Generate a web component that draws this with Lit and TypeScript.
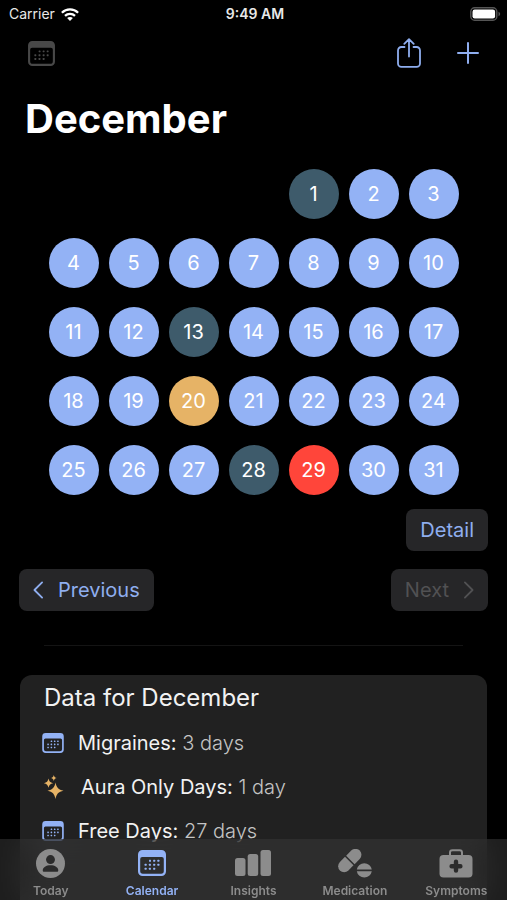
import { LitElement, html, css, svg } from "lit";
import { customElement, property, state } from "lit/decorators.js";
import { classMap } from "lit/directives/class-map.js";

const calendarIcon = html`<svg viewBox="0 0 28 26" fill="currentColor" aria-hidden="true">
  <path fill-rule="evenodd" d="M4.5 0h19A4.5 4.5 0 0 1 28 4.500v17a4.500 4.500 0 0 1-4.500 4.500h-19A4.500 4.500 0 0 1 0 21.500v-17A4.500 4.500 0 0 1 4.500 0zM2.200 9v12a2.700 2.700 0 0 0 2.700 2.700h18.200a2.700 2.700 0 0 0 2.700-2.700V9a2 2 0 0 0-2-2H4.200a2 2 0 0 0-2 2z"/>
  ${[
    [11, 10.5], [15.2, 10.5], [19.4, 10.5],
    [6.6, 14.5], [10.9, 14.5], [15.2, 14.5], [19.4, 14.5],
    [6.6, 18.5], [10.9, 18.5], [15.2, 18.5],
  ].map(([x, y]) => svg`<rect x=${x} y=${y - 0.7} width="2" height="2" rx="0.5"/>`)}
</svg>`;

const sparklesIcon = html`<svg viewBox="0 0 20 24" fill="currentColor" aria-hidden="true">
  <path d="M12 7.500c1 5 2.900 7.200 8 8.200-5.100 1-7 3.200-8 8.200-1-5-2.900-7.200-8-8.200 5.100-1 7-3.200 8-8.200z"/>
  <path d="M5 3.600c.6 2.900 1.700 4 4.600 4.600C6.700 8.800 5.600 9.900 5 12.800 4.400 9.900 3.300 8.800.400 8.200 3.300 7.600 4.400 6.500 5 3.600z"/>
  <path d="M10.300 0c.4 1.900 1.200 2.600 3 3-1.800.4-2.600 1.100-3 3-.4-1.900-1.200-2.600-3-3 1.800-.4 2.600-1.100 3-3z"/>
</svg>`;

const shareIcon = html`<svg viewBox="0 0 24 30" fill="none" stroke="currentColor" stroke-width="1.800" stroke-linecap="round" stroke-linejoin="round" aria-hidden="true">
  <path d="M7.500 9H4.400A3.400 3.400 0 0 0 1 12.400v13A3.400 3.400 0 0 0 4.400 28.800h15.200a3.400 3.400 0 0 0 3.400-3.400v-13A3.400 3.400 0 0 0 19.600 9h-3.100M12 18.500V1.200M7.300 5.800L12 1.100l4.700 4.700"/>
</svg>`;

const plusIcon = html`<svg viewBox="0 0 22 22" fill="none" stroke="currentColor" stroke-width="2" stroke-linecap="round" aria-hidden="true">
  <path d="M11 1v20M1 11h20"/>
</svg>`;

const chevron = (d: string) => html`<svg viewBox="0 0 12 20" fill="none" stroke="currentColor" stroke-width="2" stroke-linecap="round" stroke-linejoin="round" aria-hidden="true">
  <path d=${d}/>
</svg>`;

const wifiIcon = html`<svg viewBox="0 0 18 13" fill="none" stroke="currentColor" stroke-width="2.300" aria-hidden="true">
  <path d="M.9 4.700C5.400.3 12.600.3 17.100 4.700M4 7.800c2.800-2.700 7.200-2.700 10 0"/>
  <path d="M9 13l-2.900-2.900c1.600-1.500 4.200-1.500 5.800 0z" fill="currentColor" stroke="none"/>
</svg>`;

const batteryIcon = html`<svg viewBox="0 0 31 14" aria-hidden="true">
  <rect x=".8" y=".8" width="26" height="12.400" rx="3.800" fill="none" stroke="#555" stroke-width="1.400"/>
  <rect x="2.500" y="2.500" width="22.600" height="9" rx="2.200" fill="#fff"/>
  <path d="M28.500 4.800c2.200.8 2.200 3.600 0 4.400z" fill="#555"/>
</svg>`;

const todayIcon = html`<svg viewBox="0 0 28 28" aria-hidden="true">
  <circle cx="14" cy="14" r="14" fill="currentColor"/>
  <circle cx="14" cy="10.200" r="4.300" fill="#2b2b2b"/>
  <path d="M6.500 20.800c0-3 3.300-5 7.500-5s7.500 2 7.500 5c0 .8-.5 1.200-1.300 1.200H7.800c-.8 0-1.300-.4-1.300-1.200z" fill="#2b2b2b"/>
</svg>`;

const insightsIcon = html`<svg viewBox="0 0 36 29" fill="currentColor" aria-hidden="true">
  <rect x="0" y="9" width="10.500" height="18" rx="2.500"/>
  <rect x="12.700" y="5" width="10.500" height="22" rx="2.500"/>
  <rect x="25.500" y="1" width="10.500" height="26" rx="2.500"/>
</svg>`;

const medicationIcon = html`<svg viewBox="0 0 34 29" fill="currentColor" aria-hidden="true">
  <g transform="rotate(-45 11.800 11.500)">
    <path d="M11 5.500v12H3.800a6 6 0 0 1 0-12z"/>
    <path d="M12.600 5.500v12h7.200a6 6 0 0 0 0-12z"/>
  </g>
  <path d="M18.800 20.600a7.600 7.600 0 0 1 15 0zM18.800 22.200a7.600 7.600 0 0 0 15 0z"/>
</svg>`;

const symptomsIcon = html`<svg viewBox="0 0 34 29" aria-hidden="true">
  <path d="M11 7V3.600A2.400 2.400 0 0 1 13.400 1.200h7.200A2.400 2.400 0 0 1 23 3.600V7" fill="none" stroke="currentColor" stroke-width="2"/>
  <rect x=".5" y="6" width="33" height="22.500" rx="4" fill="currentColor"/>
  <path d="M17 12.800v8.800M12.600 17.200h8.800" stroke="#2b2b2b" stroke-width="4.400" stroke-linecap="round"/>
</svg>`;

@customElement("status-bar")
class StatusBar extends LitElement {
  static styles = css`
    :host {
      display: grid;
      grid-template-columns: 1fr auto 1fr;
      align-items: center;
      height: 28px;
      padding: 0 6px 0 9px;
      font-size: 14px;
      line-height: 20px;
      color: #e8e8e8;
    }
    .carrier { display: flex; align-items: center; gap: 6px; }
    .carrier svg { width: 18px; height: 13px; color: #fff; }
    .time { font-weight: 600; }
    .battery { display: flex; justify-content: flex-end; }
    .battery svg { width: 31px; height: 14px; }
  `;
  render() {
    return html`
      <div class="carrier"><span>Carrier</span>${wifiIcon}</div>
      <div class="time">9:49 AM</div>
      <div class="battery">${batteryIcon}</div>
    `;
  }
}

const dayKinds: Record<number, string> = { 1: "migraine", 13: "migraine", 28: "migraine", 20: "aura", 29: "today" };

@customElement("month-grid")
class MonthGrid extends LitElement {
  @property({ type: Number }) days = 31;

  static styles = css`
    :host {
      display: grid;
      grid-template-columns: repeat(7, 50px);
      gap: 19px 10px;
      justify-content: center;
    }
    .day {
      height: 50px;
      padding: 0;
      border: 0;
      border-radius: 50%;
      background: #93b2f5;
      color: #fff;
      font: inherit;
      font-size: 20px;
    }
    .blank { grid-column: span 4; }
    .migraine { background: #3e5b6b; }
    .aura { background: #e6b366; }
    .today { background: #ff453a; }
  `;
  render() {
    return html`
      <span class="blank"></span>
      ${Array.from({ length: this.days }, (_, i) => i + 1).map(
        (d) => html`<button class="day ${dayKinds[d] ?? ""}">${d}</button>`
      )}
    `;
  }
}

@customElement("month-summary")
class MonthSummary extends LitElement {
  static styles = css`
    :host {
      display: block;
      padding: 6px 22px 76px;
      border-radius: 12px;
      background: #212121;
      color: #f2f2f2;
    }
    .heading { margin: 0 0 6px; padding-left: 2px; font-size: 24px; line-height: 34px; font-weight: 400; }
    .rows { margin: 0; padding: 0; list-style: none; }
    .row { display: flex; align-items: center; gap: 14px; height: 44px; font-size: 20px; }
    .row svg { width: 22px; height: 20px; color: #93b2f5; }
    .row.aura { gap: 16px; }
    .row.aura svg { width: 23px; height: 24px; color: #e6b366; }
    .value { color: #c4c4c4; font-weight: 300; }
  `;
  render() {
    const rows = [
      { label: "Migraines:", value: "3 days", aura: false },
      { label: "Aura Only Days:", value: "1 day", aura: true },
      { label: "Free Days:", value: "27 days", aura: false },
    ];
    return html`
      <h2 class="heading">Data for December</h2>
      <ul class="rows">
        ${rows.map(
          (r) => html`<li class=${classMap({ row: true, aura: r.aura })}>
            ${r.aura ? sparklesIcon : calendarIcon}
            <span>${r.label} <span class="value">${r.value}</span></span>
          </li>`
        )}
      </ul>
    `;
  }
}

@customElement("tab-bar")
class TabBar extends LitElement {
  @state() private selected = "Calendar";

  static styles = css`
    :host {
      display: grid;
      grid-template-columns: repeat(5, 1fr);
      height: 61px;
      background: rgba(58, 58, 58, 0.5);
      backdrop-filter: blur(16px);
    }
    .tab {
      display: flex;
      flex-direction: column;
      align-items: center;
      gap: 4px;
      padding: 10px 0 0;
      border: 0;
      background: none;
      color: #8c8c8c;
      font: inherit;
      font-size: 12px;
      line-height: 18px;
      font-weight: 600;
    }
    .tab svg { height: 29px; }
    .tab.selected { color: #93b2f5; }
    .tab.calendar svg { height: 26px; padding: 1px 0 2px; }
  `;
  render() {
    const tabs = [
      { name: "Today", icon: todayIcon },
      { name: "Calendar", icon: calendarIcon },
      { name: "Insights", icon: insightsIcon },
      { name: "Medication", icon: medicationIcon },
      { name: "Symptoms", icon: symptomsIcon },
    ];
    return tabs.map(
      (t) => html`<button
        class=${classMap({ tab: true, selected: t.name === this.selected, calendar: t.name === "Calendar" })}
        @click=${() => (this.selected = t.name)}
      >${t.icon}<span>${t.name}</span></button>`
    );
  }
}

@customElement("app-root")
class AppRoot extends LitElement {
  static styles = css`
    :host {
      display: flex;
      flex-direction: column;
      position: relative;
      height: 100vh;
      overflow: hidden;
      background: #000;
      color: #fff;
      font-family: Inter, "Liberation Sans", sans-serif;
    }
    .toolbar { display: flex; align-items: center; gap: 36px; height: 50px; padding: 0 28px; }
    .icon-button { display: flex; padding: 0; border: 0; background: none; color: #8faeef; }
    .icon-button:disabled { color: #484848; }
    .icon-button.first { margin-right: auto; }
    .first svg { width: 27px; height: 25px; }
    .share svg { width: 24px; height: 30px; }
    .plus svg { width: 22px; height: 22px; }
    .content { flex: 1; min-height: 0; overflow-y: auto; scrollbar-width: none; }
    .title { margin: 0; padding: 17px 25px 26px; font-size: 40px; line-height: 48px; font-weight: 700; }
    .actions { display: flex; justify-content: space-between; padding: 0 19px; }
    .actions.detail { justify-content: flex-end; padding-top: 14px; padding-bottom: 18px; }
    .button {
      display: flex;
      align-items: center;
      gap: 14px;
      height: 42px;
      padding: 0 14px;
      border: 0;
      border-radius: 8px;
      background: #262628;
      color: #8faeef;
      font: inherit;
      font-size: 20px;
    }
    .button:disabled { color: #515153; }
    .button svg { width: 11px; height: 18px; }
    .divider { height: 1px; margin: 34px 44px 29px; border: 0; background: #141414; }
    .summary { margin: 0 20px 80px; }
    .tabs { position: absolute; left: 0; right: 0; bottom: 0; }
  `;
  render() {
    return html`
      <status-bar></status-bar>
      <nav class="toolbar">
        <button class="icon-button first" disabled aria-label="Calendar view">${calendarIcon}</button>
        <button class="icon-button share" aria-label="Share">${shareIcon}</button>
        <button class="icon-button plus" aria-label="Add">${plusIcon}</button>
      </nav>
      <main class="content">
        <h1 class="title">December</h1>
        <month-grid></month-grid>
        <div class="actions detail"><button class="button">Detail</button></div>
        <div class="actions">
          <button class="button">${chevron("M10 1.500L1.500 10l8.500 8.500")}Previous</button>
          <button class="button" disabled>Next${chevron("M2 1.500L10.500 10 2 18.500")}</button>
        </div>
        <hr class="divider" />
        <month-summary class="summary"></month-summary>
      </main>
      <tab-bar class="tabs"></tab-bar>
    `;
  }
}
